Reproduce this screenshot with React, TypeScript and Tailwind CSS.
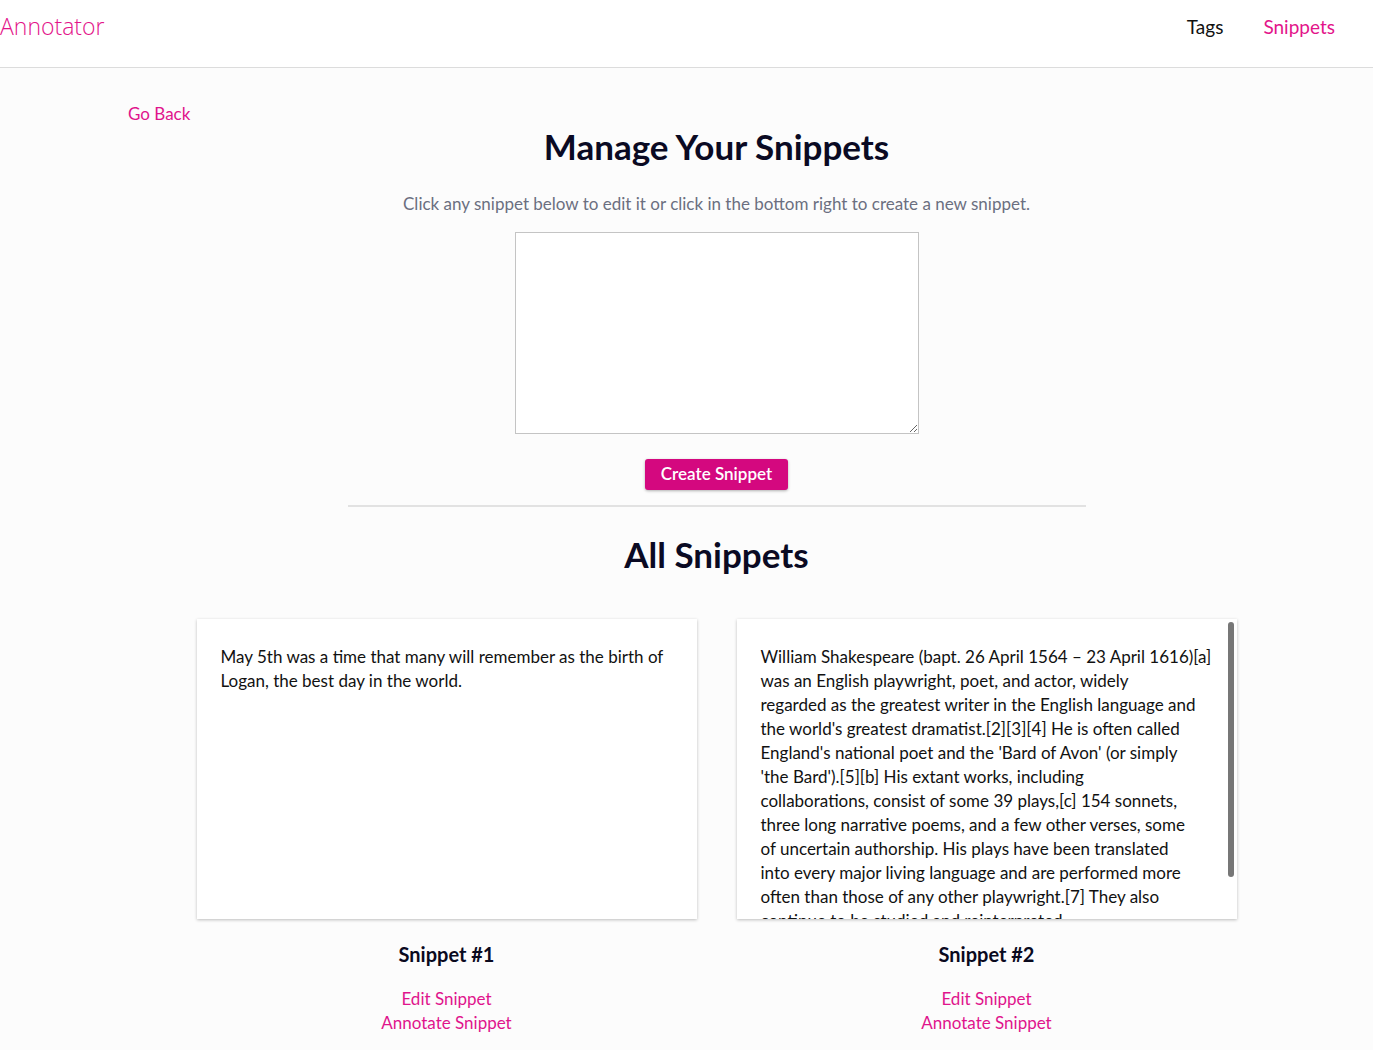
import React from "react";

const SHAKESPEARE_LINES = [
  "William Shakespeare (bapt. 26 April 1564 – 23 April 1616)[a]",
  "was an English playwright, poet, and actor, widely",
  "regarded as the greatest writer in the English language and",
  "the world's greatest dramatist.[2][3][4] He is often called",
  "England's national poet and the 'Bard of Avon' (or simply",
  "'the Bard').[5][b] His extant works, including",
  "collaborations, consist of some 39 plays,[c] 154 sonnets,",
  "three long narrative poems, and a few other verses, some",
  "of uncertain authorship. His plays have been translated",
  "into every major living language and are performed more",
  "often than those of any other playwright.[7] They also",
  "continue to be studied and reinterpreted.",
];

const snippets = [
  {
    id: 1,
    lines: ["May 5th was a time that many will remember as the birth of", "Logan, the best day in the world."],
    scroll: false,
  },
  { id: 2, lines: SHAKESPEARE_LINES, scroll: true },
];

function SnippetCard({ id, lines, scroll }: { id: number; lines: string[]; scroll: boolean }) {
  return (
    <div className="flex flex-col items-center">
      <div className="relative w-[500px] h-[300px] bg-white shadow-[0_1px_3px_rgba(0,0,0,0.25)] overflow-hidden">
        <div className="px-6 pt-[26px] pb-6 text-[17px] leading-6 text-[#111]">
          {lines.map((l, i) => (
            <span key={i} className="block whitespace-nowrap">
              {l}
            </span>
          ))}
        </div>
        {/* scrollbar thumb of the overflowing card */}
        {scroll && (
          <div className="absolute top-[3px] right-[3px] w-[6px] h-[255px] rounded-full bg-[#777]" />
        )}
      </div>
      <h3 className="mt-[20px] text-[20px] font-bold text-[#0a0a1e]">Snippet #{id}</h3>
      <a href="#" className="mt-[18px] text-[17px] leading-6 text-[#e0148c]">
        Edit Snippet
      </a>
      <a href="#" className="text-[17px] leading-6 text-[#e0148c]">
        Annotate Snippet
      </a>
    </div>
  );
}

export default function App() {
  return (
    <div className="min-h-screen bg-[#fcfcfc] font-['Lato',sans-serif]">
      <nav className="h-[68px] bg-white border-b border-[#dcdcdc] flex items-center justify-between pr-[38px]">
        <a href="#" className="text-[23px] font-light text-[#e3148a] font-['Open_Sans',sans-serif] -mt-[14px]">
          Annotator
        </a>
        <ul className="flex items-center gap-10 text-[19px] -mt-[12px]">
          <li className="text-[#111]">Tags</li>
          <li className="text-[#e3148a]">Snippets</li>
        </ul>
      </nav>

      <main className="flex flex-col items-center pl-[60px]">
        <div className="w-full pl-[68px] mt-[33px]">
          <a href="#" className="text-[17px] text-[#e0148c]">
            Go Back
          </a>
        </div>
        <h1 className="-mt-[1px] text-[35px] font-bold text-[#0a0a23] leading-10">
          Manage Your Snippets
        </h1>
        <p className="mt-[26px] text-[17px] text-[#6b6f80] leading-6">
          Click any snippet below to edit it or click in the bottom right to create a new snippet.
        </p>
        <textarea className="mt-[16px] w-[404px] h-[202px] bg-white border border-[#c4c4c4] resize" />
        <button className="mt-[25px] h-[31px] px-4 rounded-[3px] bg-[#d4087f] text-white text-[17px] font-semibold shadow-[0_1px_3px_rgba(0,0,0,0.3)]">
          Create Snippet
        </button>
        <hr className="mt-[15px] w-[738px] border-t-2 border-[#e2e2e2]" />
        <h2 className="mt-[27px] text-[35px] font-bold text-[#0a0a23] leading-10">
          All Snippets
        </h2>
        <div className="mt-[45px] flex gap-10">
          {snippets.map((s) => (
            <SnippetCard key={s.id} id={s.id} lines={s.lines} scroll={s.scroll} />
          ))}
        </div>
      </main>
    </div>
  );
}
